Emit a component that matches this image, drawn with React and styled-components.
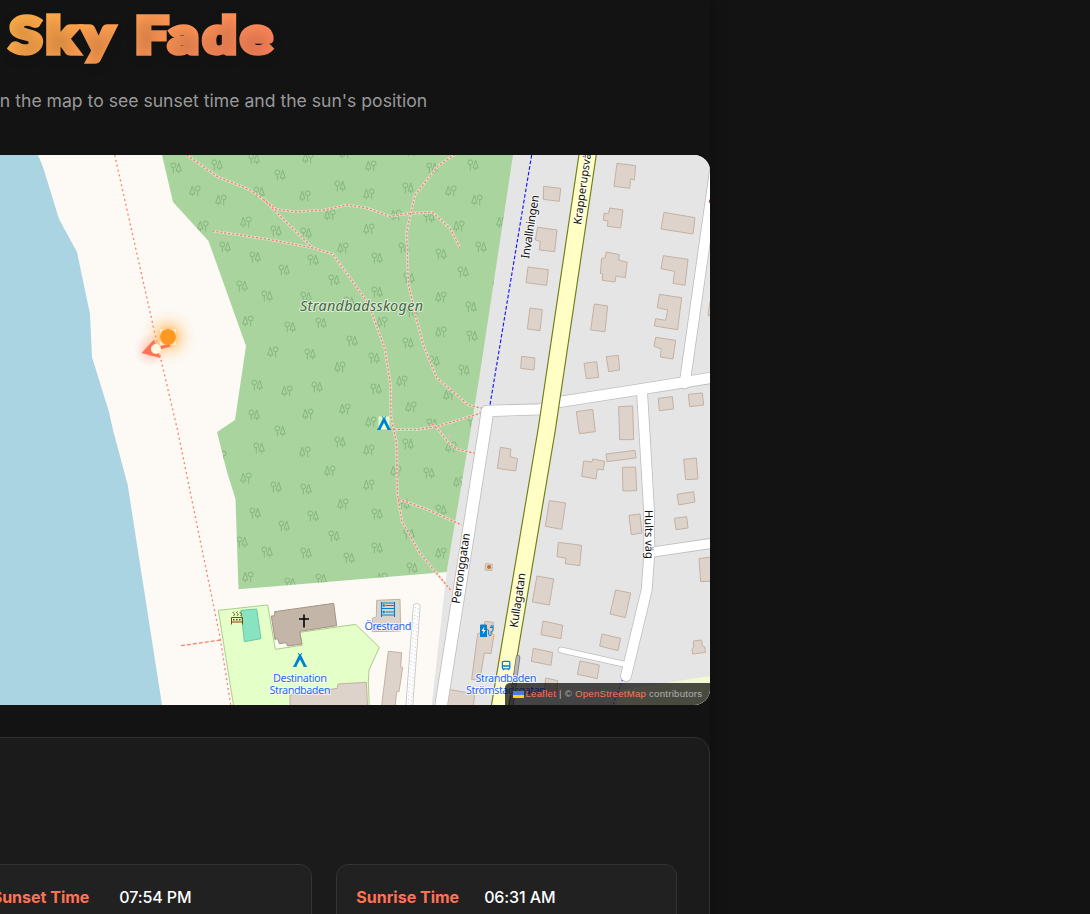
import React from "react";
import styled, { createGlobalStyle } from "styled-components";

const GlobalStyle = createGlobalStyle`
  * { box-sizing: border-box; }
  html, body { margin: 0; background: #131313; overflow: hidden; }
  body { font-family: Inter, "Liberation Sans", sans-serif; color: #fff; }
`;

const Page = styled.div`
  height: 914px;
  overflow: hidden;
  background: #131313;
`;

const Container = styled.main`
  width: 1136px;
  height: 940px;
  margin-left: -426px;
  display: flex;
  flex-direction: column;
  box-shadow: 0 0 16px rgba(0, 0, 0, 0.3);
`;

const Header = styled.header`
  height: 155px;
  flex: none;
  text-align: center;
`;

const Title = styled.h1`
  width: max-content;
  margin: 0 auto;
  padding: 0 4px 0 6px;
  height: 76px;
  font: 900 50px/69px Lato, sans-serif;
  letter-spacing: 3.8px;
  background: linear-gradient(135deg, #ffb347, #ff7e5f);
  -webkit-background-clip: text;
  background-clip: text;
  color: transparent;
  -webkit-text-stroke: 5.4px transparent;
  text-shadow: 0 4px 12px rgba(0, 0, 0, 0.22);
  transform: scaleX(1.17);
`;

const Subtitle = styled.p`
  margin: 11px 0 0;
  font-size: 17.6px;
  line-height: 27px;
  color: #999;
`;

const MapFrame = styled.section`
  position: relative;
  flex: none;
  height: 550px;
  border-radius: 16px;
  overflow: hidden;
  background: #fdf9f4;
`;

const MapDrawing = styled.svg`
  display: block;
  margin-left: 426px;
  font-family: "Noto Sans", sans-serif;
`;

const Attribution = styled.div`
  position: absolute;
  right: 0;
  bottom: 0;
  width: 205px;
  height: 22px;
  padding-left: 8px;
  display: flex;
  align-items: center;
  gap: 2px;
  border-top-left-radius: 5px;
  background: rgba(0, 0, 0, 0.7);
  color: #b0b0b0;
  font: 9.6px/22px "Liberation Sans", Arial, sans-serif;
  letter-spacing: 0.26px;
  white-space: pre;
`;

const Credit = styled.span`
  color: #ff7355;
`;

const Flag = styled.i`
  width: 10.5px;
  height: 7px;
  background: linear-gradient(#4c7be1 50%, #ffd500 50%);
`;

const Panel = styled.section`
  flex: none;
  margin-top: 32px;
  height: 240px;
  padding: 126px 32px 0;
  border: 1px solid #303030;
  border-radius: 16px;
  background: #1b1b1b;
  display: grid;
  grid-template-columns: repeat(3, 1fr);
  gap: 24px;
`;

const Card = styled.div`
  height: 110px;
  padding: 20px 19px;
  border: 1px solid #333;
  border-radius: 12px;
  background: #212121;
  display: flex;
  gap: ${(p) => p.$gap || 25}px;
  font-size: 16px;
  line-height: 25px;
`;

const CardLabel = styled.span`
  color: #ff7355;
  font-weight: 700;
`;

const CardValue = styled.span`
  font-weight: 500;
  letter-spacing: -0.1px;
`;

/* Wood texture: one 256px tile; "q" = round tree on the left, "p" = on the right. */
const TREES = [
  [254, 159, "q"], [308, 158, "p"], [280, 175, "q"], [371, 166, "p"], [340, 186, "q"],
  [305, 196, "p"], [369, 194, "p"], [259, 192, "q"], [432, 168, "q"], [473, 165, "q"],
  [408, 188, "q"], [451, 191, "p"], [477, 200, "p"], [330, 215, "p"], [396, 215, "p"],
  [429, 217, "q"], [459, 226, "p"], [502, 222, "p"], [276, 231, "q"], [306, 233, "q"],
  [369, 229, "p"], [343, 248, "p"], [404, 248, "q"], [481, 247, "q"], [377, 258, "q"],
  [441, 254, "q"], [255, 257, "q"], [313, 260, "q"], [284, 270, "q"], [463, 272, "q"],
  [334, 280, "q"], [409, 278, "q"], [377, 292, "q"], [441, 297, "p"], [471, 307, "q"],
  [267, 296, "q"], [306, 297, "q"], [498, 286, "q"], [504, 321, "p"], [290, 327, "q"],
  [321, 323, "q"], [349, 302, "q"], [382, 322, "p"], [412, 312, "q"], [441, 332, "p"],
  [472, 336, "q"], [352, 341, "q"], [408, 343, "q"], [273, 352, "p"], [310, 354, "q"],
  [374, 358, "q"], [434, 361, "q"], [340, 367, "p"], [464, 370, "q"], [257, 385, "q"],
  [287, 391, "p"], [317, 387, "q"], [376, 389, "q"], [402, 381, "p"], [449, 395, "p"],
  [411, 407, "p"], [345, 409, "p"],
];

/* District geometry is stored at three units per pixel. */
const NORTH_EAST = [
  "191,109 242,115 238,154 190,148",
  "173,232 231,240 224,305 178,300 181,274 166,270",
  "144,351 205,359 200,406 138,398",
  "150,474 187,479 180,542 142,537",
  "125,619 165,624 162,660 122,655",
  "411,40 467,47 463,90 452,87 449,115 402,109",
  "389,174 429,180 422,234 382,229 384,213 370,211 372,190 386,190",
  "379,306 418,314 416,330 442,337 436,383 408,378 405,396 367,391 368,372 361,370 365,325 375,324",
  "343,462 383,468 375,545 332,540",
  "312,640 350,635 356,682 319,686",
  "379,620 415,616 419,660 386,665",
  "552,187 645,203 639,252 543,237",
  "550,317 624,328 615,406 579,400 584,364 543,356",
  "538,433 605,443 593,539 523,528 527,506 557,511 563,480 532,473",
  "527,562 587,571 579,627 541,621 544,597 522,589",
  "690,455 684,496 700,498 700,455",
  "535,745 577,740 581,777 538,782",
  "625,733 667,729 671,765 629,770",
  "289,785 338,778 346,845 298,851",
  "416,770 458,768 461,869 419,869",
];

const SOUTH_EAST = [
  "61,52 93,57 90,80 113,86 107,123 52,115",
  "208,212 257,219 245,298 196,289",
  "235,337 305,346 299,407 256,401 258,385 231,380",
  "171,438 221,447 208,525 157,516",
  "189,573 248,586 243,626 183,614",
  "160,655 218,667 213,706 154,694",
  "300,693 358,705 352,746 292,733",
  "197,744 233,752 230,790 192,790",
  "311,93 336,96 338,87 374,94 370,120 352,117 348,147 305,139",
  "378,72 465,61 468,84 381,95",
  "427,112 467,111 470,182 429,183",
  "447,256 480,252 486,309 454,314",
  "611,88 649,84 654,147 617,149",
  "591,193 641,185 645,216 596,225",
  "583,265 620,260 624,294 588,299",
  "657,386 700,380 700,453 662,455",
  "407,480 452,489 436,563 390,552",
  "366,612 422,625 414,662 359,648",
  "640,633 665,630 667,647 674,650 677,667 638,672 636,656 641,652",
];

const SOUTH = [
  "410,511 480,508 482,603 397,605 397,565 409,561",
  "445,664 485,668 482,710 488,712 477,785 470,785 465,835 424,835",
  "735,574 760,577 757,612 762,614 753,671 733,669 719,752 695,748 713,612 728,605",
  "625,778 704,792 700,830 620,830",
  "150,795 292,775 294,762 379,757 383,835 150,835",
  "737,401 757,403 755,422 735,420",
];

const FOOTPATHS = [
  "-160,15 -65,82 0,107 30,120 70,148 108,177 165,186 250,180 322,165 380,174 450,199 510,190 577,187 630,235 660,293",
  "70,148 218,294",
  "-83,243 0,255 95,270 218,294 278,312 385,460 435,597 451,700 453,800 461,840 470,880 472,1030 486,1115 540,1210 635,1324",
  "645,13 595,47 525,135 500,245 505,400 525,490 550,585 590,683 685,765 730,776",
  "461,838 535,838 590,830 730,787",
  "577,822 600,845 625,878 650,897 708,911",
  "475,1047 560,1078 665,1125",
];

const STREETS = [
  "480 150|20,783 180,778 230,757 480,718 710,681|33",
  "480 150|614,700 708,40|32",
  "480 150|486,725 493,840 507,1080 508,1210 500,1320 438,1578|32",
  "480 430|510,367 710,338|30",
  "480 430|243,660 430,702|17",
  "240 430|742,-55 734,0 602,835|37",
].map((s) => s.split("|"));

const at = (x, y) => `translate(${x} ${y}) scale(.33333)`;

function Buildings({ origin, shapes }) {
  return (
    <g transform={at(...origin)} fill="#ddd3ca" stroke="#c3b1a3" strokeWidth="3">
      {shapes.map((s) => <polygon key={s} points={s} />)}
    </g>
  );
}

function Streets() {
  const draw = (color, extra) => STREETS.map(([o, pts, w]) => (
    <polyline key={color + pts} transform={`translate(${o}) scale(.33333)`} points={pts}
      stroke={color} strokeWidth={Number(w) + extra} />
  ));
  return (
    <g fill="none" strokeLinecap="round" strokeLinejoin="round">
      {draw("#bfbfbf", 3)}
      {draw("#fff", -2)}
    </g>
  );
}

function Label({ x, y, angle = 0, size = 11, length, color = "#111", anchor = "start", halo = "#ffffffb0", children, ...rest }) {
  return (
    <text transform={`translate(${x} ${y}) rotate(${angle})`} fontSize={size} fill={color}
      stroke={halo} strokeWidth="2" strokeLinejoin="round" paintOrder="stroke"
      textAnchor={anchor} textLength={length} {...rest}>{children}</text>
  );
}

function Tent({ x, y }) {
  return (
    <g transform={`translate(${x} ${y})`}>
      <path d="M-1.7-6.8 0-4.2 1.7-6.8" fill="none" stroke="#0080d5" strokeWidth="1.1" />
      <path d="M-.9-5.2H.9L6.8 6.8H3.8L0-.6-3.8 6.8H-6.8Z" fill="#0080d5" />
      <path d="M-6.8 5.8H-3.4V6.8H-6.8ZM6.8 5.8H3.4V6.8H6.8Z" fill="#0080d5" />
    </g>
  );
}

function Woods() {
  return (
    <>
      <defs>
        <clipPath id="wood"><path d="M162 155 173 202 208.5 241 246 346 235 420 217 432 227 472 235.5 499 238.5 589.3 446.7 572 470.7 430 480 373 513 155Z" /></clipPath>
        <g id="round" fill="none" stroke="#86b57f" strokeWidth="1">
          <circle cx="0" cy="-2.6" r="2.4" /><path d="M0 0V5.4" />
        </g>
        <g id="pine" fill="none" stroke="#86b57f" strokeWidth="1">
          <path d="M0-4.8-2.6 3H2.6ZM0 3V5.4" />
        </g>
      </defs>
      <g clipPath="url(#wood)">
        <rect x="160" y="150" width="360" height="445" fill="#a9d49e" />
        {[-256, 0].map((dx) => [-256, 0, 256].map((dy) => TREES.map(([x, y, k]) => (
          <g key={`${dx}${dy}${x}${y}`} transform={`translate(${x + dx} ${y + dy})`}>
            <use href="#round" x={k === "q" ? -2.7 : 2.7} />
            <use href="#pine" x={k === "q" ? 2.7 : -2.7} />
          </g>
        ))))}
      </g>
    </>
  );
}

function SunMarker() {
  return (
    <g>
      <defs>
        <radialGradient id="glow">
          <stop offset=".2" stopColor="#ff9800" stopOpacity=".6" />
          <stop offset=".5" stopColor="#ffa940" stopOpacity=".24" />
          <stop offset=".75" stopColor="#ffb347" stopOpacity=".06" />
          <stop offset="1" stopColor="#ffb347" stopOpacity="0" />
        </radialGradient>
        <radialGradient id="redGlow">
          <stop offset="0" stopColor="#ff7055" stopOpacity=".5" />
          <stop offset=".6" stopColor="#ff7055" stopOpacity=".12" />
          <stop offset="1" stopColor="#ff7055" stopOpacity="0" />
        </radialGradient>
      </defs>
      <circle cx="151" cy="350" r="17" fill="url(#redGlow)" />
      <circle cx="168" cy="337" r="29" fill="url(#glow)" />
      <path d="M160 329h16v16h-16z" fill="#ffe6c0" />
      <path d="M141.5 353 154 339.5 160.5 358Z" fill="#ff7355" />
      <path d="M156 349 170 345" stroke="#ff7355" strokeWidth="3" />
      <circle cx="168" cy="337" r="8" fill="#ff9820" />
      <circle cx="156" cy="349" r="5" fill="#fff8e1" />
    </g>
  );
}

function StreetMap() {
  return (
    <MapDrawing width="710" height="550" viewBox="0 155 710 550">
      <path d="M512 155 479 373 469.7 430 446.7 572 431.7 705H710V155Z" fill="#e5e5e5" />
      <path d="M0 155H38L43 167 59 219 77 252 90 314 92 357 109 412 113 430 127.7 485 162 705H0Z" fill="#aad4e1" />
      <path d="M620 690 710 676V705H616Z" fill="#f3f9d4" />
      <Woods />
      <g transform={at(240, 430)}>
        <path d="M-65,541 83,525 106,658 186,646 180,607 347,583 418,652 387,720 385,757 388,835H-18Z" fill="#e4ffc7" stroke="#a9cf89" strokeWidth="3" />
        <path d="M3,541 50,537 63,626 13,635Z" fill="#88e3c0" stroke="#6cc9a4" strokeWidth="3" />
        <path d="M104,545 281,520 290,587 179,604 186,642 143,648 138,638 118,641 113,625 105,629 94,558 104,557Z" fill="#c4b5a9" stroke="#a59386" strokeWidth="3" />
        <path d="M530,531 507,840" stroke="#c4c4c4" strokeWidth="23" strokeLinecap="round" />
        <path d="M530,531 507,840" stroke="#fff" strokeWidth="18" strokeLinecap="round" />
        <path d="M526,531 503,840M535,535 512,840" stroke="#d8d8d8" strokeWidth="4" strokeDasharray="4 7 3 9" />
      </g>
      <Buildings origin={[480, 150]} shapes={NORTH_EAST} />
      <Buildings origin={[480, 430]} shapes={SOUTH_EAST} />
      <Buildings origin={[240, 430]} shapes={SOUTH} />
      <circle cx="489" cy="567" r="2" fill="#c9701c" />
      <circle cx="449.3" cy="435.6" r="1.7" fill="#d2c5b3" />
      <g transform={at(240, 150)} fill="none" strokeLinejoin="round">
        {FOOTPATHS.map((p) => <polyline key={p} points={p} stroke="#e3eedd" strokeOpacity=".7" strokeWidth="8" />)}
        {FOOTPATHS.map((p) => <polyline key={p + "d"} points={p} stroke="#fa8072" strokeWidth="4" strokeDasharray="7 5" />)}
      </g>
      <g fill="none" stroke="#fa8072" strokeWidth="1.3">
        <path d="M114.7 155 157 343 177.5 430 220 637 230.7 705" strokeDasharray="2 3" />
        <path d="M181 645.7 220.7 640" strokeDasharray="4 2" />
      </g>
      <Streets />
      <g transform={at(480, 150)} fill="none">
        <path d="M325,0 200,840 58,1680" stroke="#707d1c" strokeWidth="55" />
        <path d="M325,0 200,840 58,1680" stroke="#ffffc5" strokeWidth="48" />
        <path d="M155,15 30,765" stroke="#1a1aff" strokeWidth="3.5" strokeDasharray="11 6" />
        <path d="M427,1590 398,1668" stroke="#5a4fff" strokeWidth="3.5" strokeDasharray="4 8" />
        <path d="M114,1522 94,1665" stroke="#777" strokeWidth="14" strokeLinecap="round" />
        <path d="M114,1522 94,1665" stroke="#b8b8b8" strokeWidth="9" strokeLinecap="round" />
      </g>

      <Label x="300" y="311" size="14.4" length="123" fontStyle="italic" color="#44663f" halo="#ffffffa0">Strandbadsskogen</Label>
      <Label x="529" y="259" angle="-81" size="11.6" length="64">Invallningen</Label>
      <Label x="581" y="225" angle="-82" size="11">Krapperupsvägen</Label>
      <Label x="459.5" y="604" angle="-81.5" size="11.4" length="71">Perronggatan</Label>
      <Label x="517.5" y="628" angle="-81.5" size="11.4" length="55">Kullagatan</Label>
      <Label x="644.7" y="510" angle="89" size="11.2" length="49">Hults väg</Label>
      <Label x="714.5" y="205" angle="-81">a</Label>
      <g>
        <Label x="388" y="630" size="11" length="47" color="#2a65f0" anchor="middle">Örestrand</Label>
        <Label x="300" y="682" size="11" length="54" color="#2a65f0" anchor="middle">Destination</Label>
        <Label x="300" y="694" size="11" length="61" color="#2a65f0" anchor="middle">Strandbaden</Label>
        <Label x="506" y="682" size="11" length="61" color="#2a65f0" anchor="middle">Strandbaden</Label>
        <Label x="506" y="694" size="11" length="80" color="#2a65f0" anchor="middle">Strömstadsgatan</Label>
      </g>

      <path d="M378.5 416.5h11v13h-11z" fill="#e4ffc7" />
      <Tent x="384" y="423.3" />
      <Tent x="300" y="660" />
      <path d="M304 614.5V627.5M299 619H309" stroke="#000" strokeWidth="1.6" fill="none" />
      <g stroke="#0080d5" strokeWidth="1.1" fill="none">
        <path d="M381.5 602V617M394.5 602V617M381.5 608.5H394.5M381.5 615H394.5M385.5 605.5H394M385.5 612H394M381.5 603H394.5" />
        <circle cx="383.7" cy="605.5" r=".7" /><circle cx="383.7" cy="612" r=".7" />
      </g>
      <g stroke="#734a08" strokeWidth="1" fill="none">
        <path d="M231.5 624.5V617.5H242.5V624.5M231.5 622H242.5" />
        <path d="M233 619.8H241" strokeWidth="1.6" strokeDasharray="1.6 1.4" />
        <path d="M234 611.5q-2 1.2 0 2.2t-.6 2M237.5 611.5q-2 1.2 0 2.2t-.6 2M241 611.5q-2 1.2 0 2.2t-.6 2" />
      </g>
      <g fill="#0080d5">
        <path d="M480 625.5q0-1 1-1h5q1 0 1 1V637h-7Z" />
        <path d="M484.4 626.5 481.6 631H483.5L482.6 634.6 485.6 630H483.8Z" fill="#fff" />
        <path d="M487 629.5q1.7 0 1.7 1.7v3q0 1.5 1.2 1.5t1.2-1.5v-3M491.2 625v2.5M493 625v2.5M489.8 627.5h3.4v2.2q0 1.7-1.7 1.7" fill="none" stroke="#0080d5" />
      </g>
      <g fill="none" stroke="#0080d5" strokeWidth="1.3">
        <rect x="502.4" y="661.4" width="7.4" height="7.4" rx="1" />
        <path d="M502.4 666H509.8M503.5 669V670.3M508.7 669V670.3" />
      </g>
      <SunMarker />
    </MapDrawing>
  );
}

export default function App() {
  return (
    <Page>
      <GlobalStyle />
      <Container>
        <Header>
          <Title>Sky Fade</Title>
          <Subtitle>Click anywhere on the map to see sunset time and the sun's position</Subtitle>
        </Header>
        <MapFrame>
          <StreetMap />
          <Attribution>
            <Flag />
            <span><Credit>Leaflet</Credit> | © <Credit>OpenStreetMap</Credit> contributors</span>
          </Attribution>
        </MapFrame>
        <Panel>
          <Card />
          <Card $gap={30}>
            <CardLabel>Sunset Time</CardLabel>
            <CardValue>07:54 PM</CardValue>
          </Card>
          <Card>
            <CardLabel>Sunrise Time</CardLabel>
            <CardValue>06:31 AM</CardValue>
          </Card>
        </Panel>
      </Container>
    </Page>
  );
}
